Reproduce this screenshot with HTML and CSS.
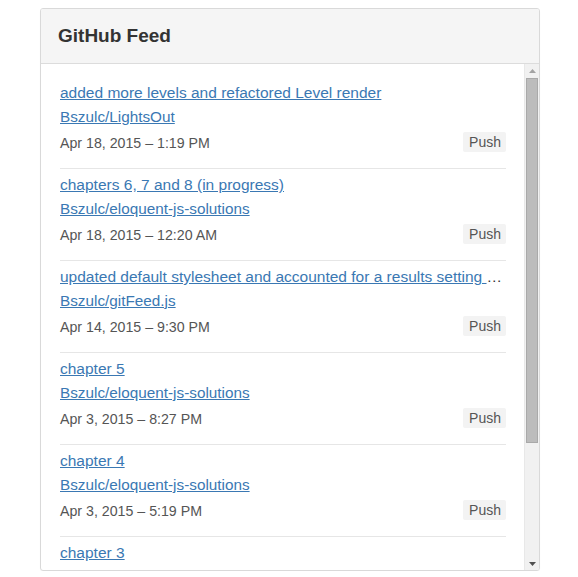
FILE: index.html
```html
<!DOCTYPE html>
<html>
<head>
<meta charset="utf-8">
<title>GitHub Feed</title>
<link rel="stylesheet" href="styles.css">
</head>
<body>
<div class="panel">
  <div class="panel-heading"><h3 class="panel-title">GitHub Feed</h3></div>
  <div class="panel-body">
    <div class="feed">
      <ul class="feed-list">
        <li class="feed-item">
          <div class="line msg"><a href="#">added more levels and refactored Level render</a></div>
          <div class="line repo"><a href="#">Bszulc/LightsOut</a></div>
          <div class="meta"><span class="date">Apr 18, 2015 – 1:19 PM</span><span class="badge">Push</span></div>
        </li>
        <li class="feed-item">
          <div class="line msg"><a href="#">chapters 6, 7 and 8 (in progress)</a></div>
          <div class="line repo"><a href="#">Bszulc/eloquent-js-solutions</a></div>
          <div class="meta"><span class="date">Apr 18, 2015 – 12:20 AM</span><span class="badge">Push</span></div>
        </li>
        <li class="feed-item">
          <div class="line msg"><a href="#">updated default stylesheet and accounted for a results setting in the options</a></div>
          <div class="line repo"><a href="#">Bszulc/gitFeed.js</a></div>
          <div class="meta"><span class="date">Apr 14, 2015 – 9:30 PM</span><span class="badge">Push</span></div>
        </li>
        <li class="feed-item">
          <div class="line msg"><a href="#">chapter 5</a></div>
          <div class="line repo"><a href="#">Bszulc/eloquent-js-solutions</a></div>
          <div class="meta"><span class="date">Apr 3, 2015 – 8:27 PM</span><span class="badge">Push</span></div>
        </li>
        <li class="feed-item">
          <div class="line msg"><a href="#">chapter 4</a></div>
          <div class="line repo"><a href="#">Bszulc/eloquent-js-solutions</a></div>
          <div class="meta"><span class="date">Apr 3, 2015 – 5:19 PM</span><span class="badge">Push</span></div>
        </li>
        <li class="feed-item">
          <div class="line msg"><a href="#">chapter 3</a></div>
          <div class="line repo"><a href="#">Bszulc/eloquent-js-solutions</a></div>
          <div class="meta"><span class="date">Apr 2, 2015 – 7:45 PM</span><span class="badge">Push</span></div>
        </li>
      </ul>
    </div>
    <div class="scrollbar">
      <div class="sb-btn"><svg width="7" height="4" viewBox="0 0 7 4"><path d="M0 4 L3.5 0 L7 4 Z" fill="#a3a3a3"/></svg></div>
      <div class="sb-track"><div class="sb-thumb"></div></div>
      <div class="sb-btn"><svg width="7" height="4" viewBox="0 0 7 4"><path d="M0 0 L7 0 L3.5 4 Z" fill="#505050"/></svg></div>
    </div>
  </div>
</div>
</body>
</html>
```

FILE: styles.css
```css
html, body {
  margin: 0;
  padding: 0;
  background: #fff;
}
body {
  padding: 8px 0 0 40px;
  font-family: "Liberation Sans", Arial, sans-serif;
  font-size: 14px;
  color: #333;
}
.panel {
  width: 500px;
  height: 563px;
  box-sizing: border-box;
  border: 1px solid #d9d9d9;
  border-radius: 3px;
  display: flex;
  flex-direction: column;
  overflow: hidden;
  box-shadow: 0 1px 1px rgba(0,0,0,0.04);
}
.panel-heading {
  height: 54px;
  background: #f5f5f5;
  border-bottom: 1px solid #dcdcdc;
  display: flex;
  align-items: center;
  padding-left: 17px;
  flex: none;
}
.panel-title {
  margin: 0;
  font-size: 19px;
  font-weight: bold;
  color: #333;
  line-height: 1;
  padding-bottom: 2px;
}
.panel-body {
  flex: 1;
  display: flex;
  min-height: 0;
}
.feed {
  flex: 1;
  overflow: hidden;
  padding: 0 18px 0 19px;
  min-width: 0;
}
.feed-list {
  list-style: none;
  margin: 0;
  padding: 13px 0 0 0;
}
.feed-item {
  padding: 4px 0 14px 0;
  border-bottom: 1px solid #e6e6e6;
}
.line {
  height: 24px;
  line-height: 24px;
  font-family: "Liberation Sans", Arial, sans-serif;
  white-space: nowrap;
  overflow: hidden;
  text-overflow: ellipsis;
  color: #333;
}
.msg {
  font-size: 15.5px;
  padding-right: 2px;
}
.repo {
  font-size: 15.3px;
}
.line a {
  color: #3a78b3;
  text-decoration: underline;
}
.meta {
  height: 24px;
  padding-top: 1px;
  display: flex;
  align-items: center;
  justify-content: space-between;
}
.date {
  color: #555;
  font-size: 14.2px;
  padding-top: 1px;
}
.badge {
  background: #f3f3f3;
  color: #555;
  font-size: 14px;
  line-height: 20px;
  height: 20px;
  padding: 0 5px 0 6px;
  border-radius: 2px;
}
.scrollbar {
  width: 15px;
  flex: none;
  display: flex;
  flex-direction: column;
  background: #f1f1f1;
  border-left: 1px solid #e8e8e8;
  box-sizing: border-box;
}
.sb-btn {
  height: 13px;
  display: flex;
  align-items: center;
  justify-content: center;
  flex: none;
}
.sb-track {
  flex: 1;
  padding: 1px 1px 0 1px;
}
.sb-thumb {
  height: 365px;
  background: #bcbcbc;
  border: 1px solid #a9a9a9;
  box-sizing: border-box;
}
```
